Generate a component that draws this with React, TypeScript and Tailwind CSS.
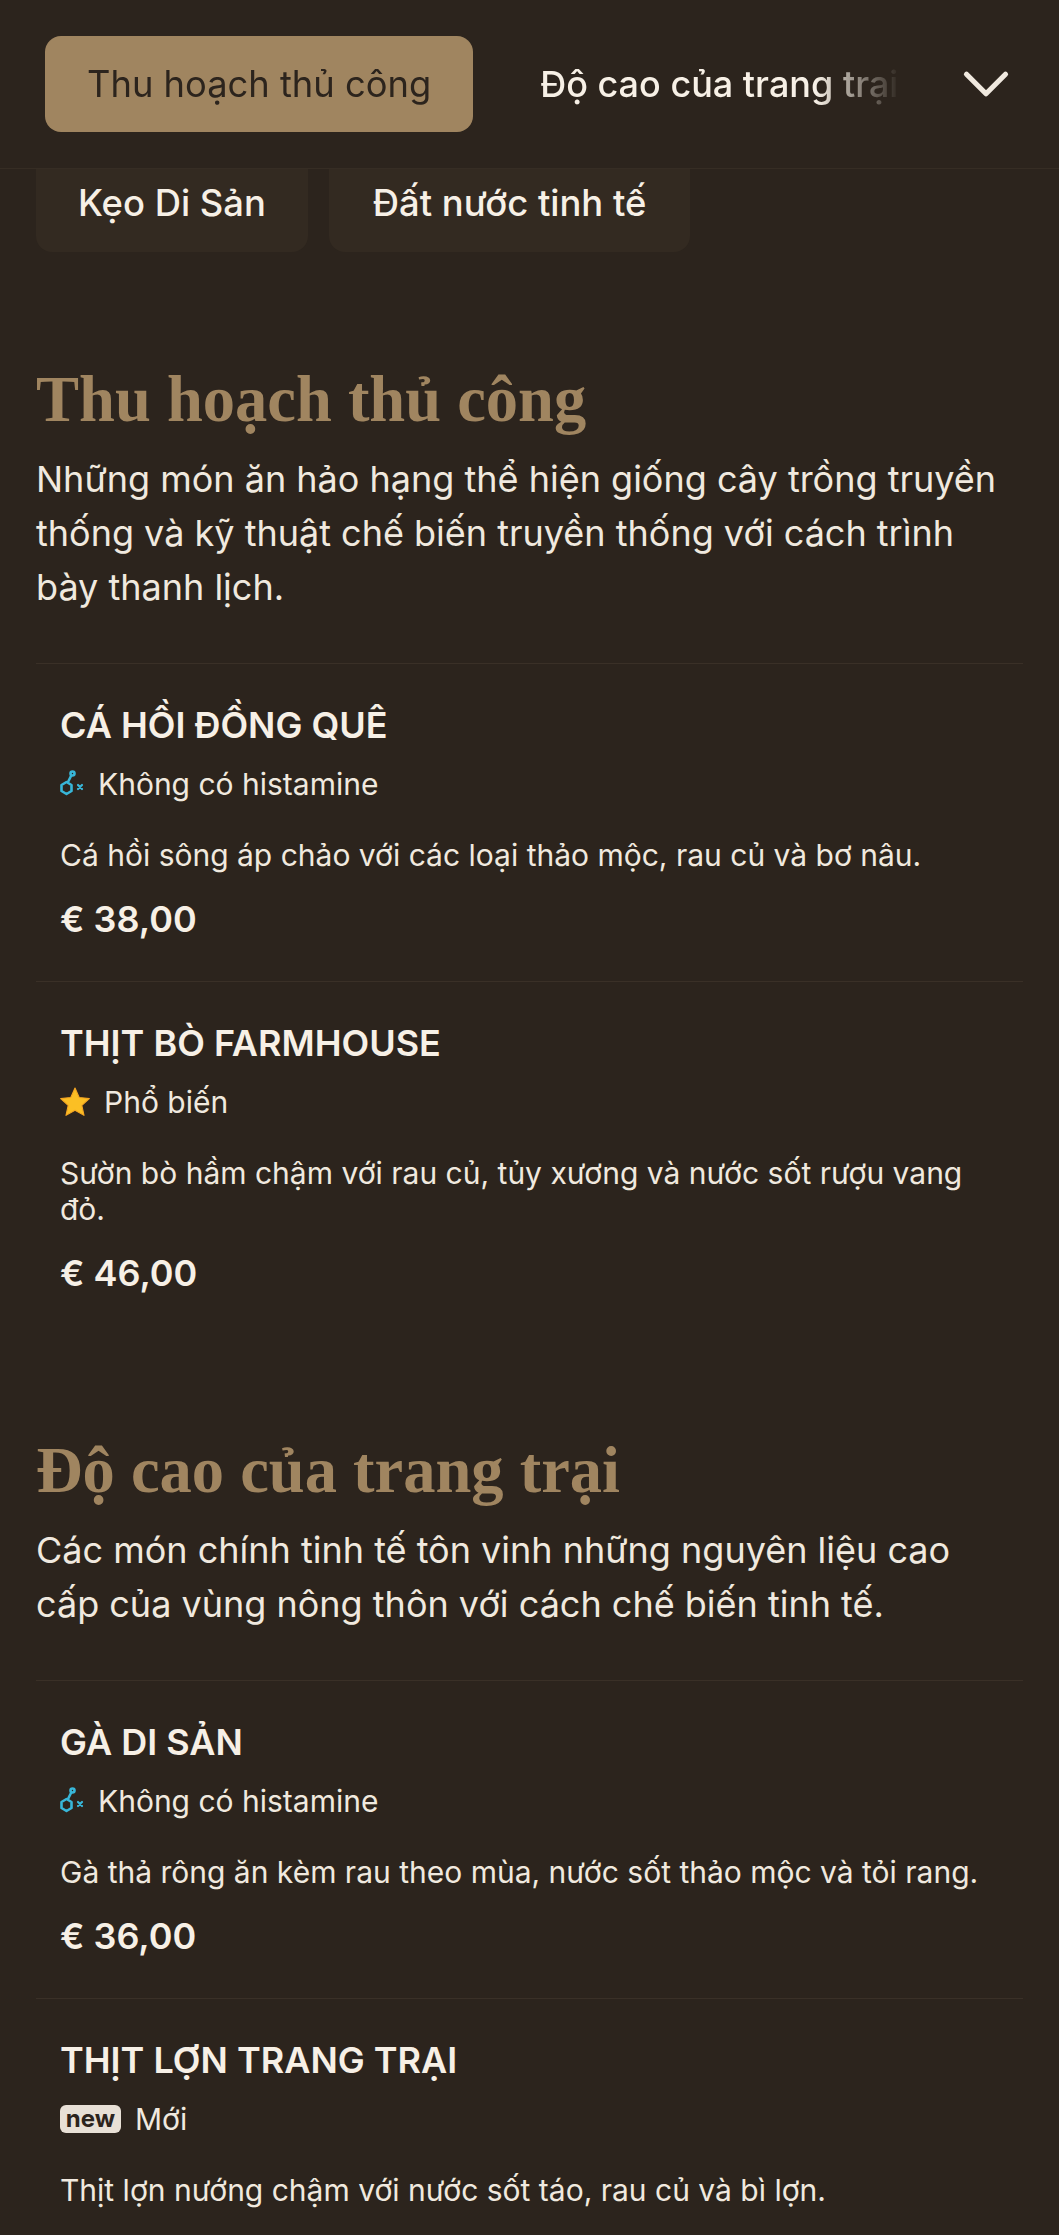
import React from 'react';
import { ChevronDown } from 'lucide-react';

const HistamineIcon = () => (
  <svg width="26" height="28" viewBox="0 0 26 28" fill="none" stroke="#38b6d8" strokeWidth="2.600" strokeLinecap="round" strokeLinejoin="round">
    <path d="M1.500 15 6.500 12l5 3v6l-5 3-5-3z" />
    <path d="M8 12 11 6" />
    <circle cx="12.500" cy="3.500" r="2" />
    <path d="M18 15l4 4M22 15l-4 4" strokeWidth="2.200" />
  </svg>
);

const StarIcon = () => (
  <svg width="30" height="30" viewBox="1 1 22 22" fill="#fbbf24" stroke="#f5a623" strokeWidth="0.800" strokeLinejoin="round">
    <path d="M12 1.800l3.100 6.900 7.400.8-5.500 5 1.600 7.300L12 18.100l-6.600 3.700L7 14.500l-5.500-5 7.400-.8z" />
  </svg>
);

const NewBadge = () => (
  <span className="inline-flex h-[28px] w-[61px] items-center justify-center rounded-[6px] bg-[#e8e0d6] text-[24px] font-bold leading-none text-[#2c241d]">
    new
  </span>
);

interface Dish {
  name: string;
  tag: string;
  icon: React.ReactNode;
  gap: string;
  desc: string;
  price?: string;
}

function DishRow({ dish }: { dish: Dish }) {
  return (
    <div className="border-t border-[#3a3027] px-[24px] pt-[39px] pb-[40px]">
      <h3 className="text-[36px] font-semibold leading-[44px] text-[#f7f0e6]">{dish.name}</h3>
      <div className={`mt-[21px] flex h-[32px] items-center text-[30px] leading-[32px] text-[#f0e9df] ${dish.gap}`}>
        {dish.icon}
        <span>{dish.tag}</span>
      </div>
      <p className="mt-[37px] text-[30px] leading-[36px] text-[#f0e9df]">{dish.desc}</p>
      {dish.price && <p className="mt-[24px] text-[36px] font-semibold leading-[44px] text-[#f7f0e6]">{dish.price}</p>}
    </div>
  );
}

const harvest: Dish[] = [
  {
    name: 'CÁ HỒI ĐỒNG QUÊ',
    tag: 'Không có histamine',
    icon: <HistamineIcon />,
    gap: 'gap-[12px]',
    desc: 'Cá hồi sông áp chảo với các loại thảo mộc, rau củ và bơ nâu.',
    price: '€ 38,00',
  },
  {
    name: 'THỊT BÒ FARMHOUSE',
    tag: 'Phổ biến',
    icon: <StarIcon />,
    gap: 'gap-[14px]',
    desc: 'Sườn bò hầm chậm với rau củ, tủy xương và nước sốt rượu vang đỏ.',
    price: '€ 46,00',
  },
];

const farm: Dish[] = [
  {
    name: 'GÀ DI SẢN',
    tag: 'Không có histamine',
    icon: <HistamineIcon />,
    gap: 'gap-[12px]',
    desc: 'Gà thả rông ăn kèm rau theo mùa, nước sốt thảo mộc và tỏi rang.',
    price: '€ 36,00',
  },
  {
    name: 'THỊT LỢN TRANG TRẠI',
    tag: 'Mới',
    icon: <NewBadge />,
    gap: 'gap-[14px]',
    desc: 'Thịt lợn nướng chậm với nước sốt táo, rau củ và bì lợn.',
  },
];

function Section({ title, intro, dishes }: { title: string; intro: string; dishes: Dish[] }) {
  return (
    <section>
      <h2 className="pt-[2px] font-['Liberation_Serif',serif] text-[64.500px] font-bold leading-[80px] text-[#a08560]">{title}</h2>
      <p className="mt-[12px] mb-[49px] text-[36px] leading-[54px] text-[#f0e9df]">{intro}</p>
      {dishes.map((dish) => (
        <DishRow key={dish.name} dish={dish} />
      ))}
    </section>
  );
}

export default function App() {
  return (
    <div className="h-[2235px] w-[1059px] overflow-hidden bg-[#2c241d] font-['Inter',sans-serif]">
      {/* Sticky tabs */}
      <header className="flex h-[169px] items-center border-b border-[#362d24] pl-[45px]">
        <div className="flex w-[856px] items-center overflow-hidden [mask-image:linear-gradient(to_right,black_90%,transparent)]">
          <span className="flex h-[96px] shrink-0 items-center rounded-[16px] bg-[#a08560] px-[42px] text-[36.300px] text-[#2c241d]">
            Thu hoạch thủ công
          </span>
          <span className="ml-[67px] shrink-0 text-[36px] font-medium text-[#f7f0e6]">Độ cao của trang trại</span>
        </div>
        <ChevronDown className="ml-[46px] text-[#f0e9df]" size={78} strokeWidth={1.600} />
      </header>

      {/* Rest of the tabs, scrolled under the header */}
      <div className="flex gap-[21px] px-[36px]">
        <span className="flex h-[83px] items-center rounded-b-[16px] bg-[#332a21] px-[42px] pb-[14px] text-[36.400px] font-medium text-[#f7f0e6]">Kẹo Di Sản</span>
        <span className="flex h-[83px] items-center rounded-b-[16px] bg-[#332a21] px-[44px] pb-[14px] text-[36.400px] font-medium text-[#f7f0e6]">Đất nước tinh tế</span>
      </div>

      <main className="flex flex-col gap-[94px] px-[36px] pt-[106px]">
        <Section
          title="Thu hoạch thủ công"
          intro="Những món ăn hảo hạng thể hiện giống cây trồng truyền thống và kỹ thuật chế biến truyền thống với cách trình bày thanh lịch."
          dishes={harvest}
        />
        <Section
          title="Độ cao của trang trại"
          intro="Các món chính tinh tế tôn vinh những nguyên liệu cao cấp của vùng nông thôn với cách chế biến tinh tế."
          dishes={farm}
        />
      </main>
    </div>
  );
}
